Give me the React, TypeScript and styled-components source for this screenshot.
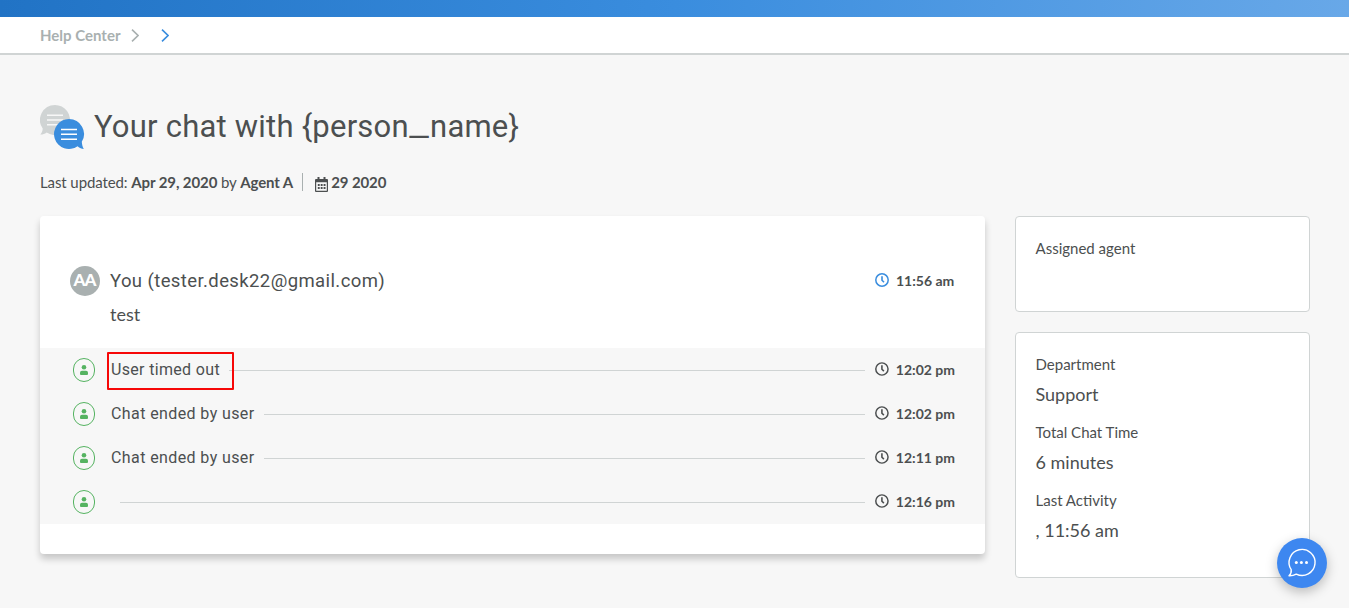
import React from 'react';
import styled, { createGlobalStyle } from 'styled-components';

const GlobalStyle = createGlobalStyle`
  * { box-sizing: border-box; }
  html, body { margin: 0; padding: 0; background: #f7f7f7; }
  body {
    height: 608px;
    overflow: hidden;
    color: #4c4f50;
    font-family: Lato, "Liberation Sans", sans-serif;
    font-size: 15px;
  }
`;

const Banner = styled.div`
  height: 17px;
  background: linear-gradient(90deg, #2173c5 0%, #3a8dde 50%, #68a8e8 100%);
`;

const Breadcrumbs = styled.nav`
  display: flex;
  align-items: center;
  height: 38px;
  padding: 0 40px 1px;
  background: #fff;
  border-bottom: 2px solid #d0d4d4;
  color: #a9b0b0;
  font-weight: 700;
  line-height: 20px;
`;

const Chevron = styled.svg<{ $gap: number }>`
  width: 8px;
  height: 13px;
  margin: 1px 0 0 ${(p) => p.$gap}px;
  fill: none;
  stroke: currentColor;
  stroke-width: 1.6;
`;

const BlueChevron = styled(Chevron)`
  color: #3a8dde;
`;

const Page = styled.main`
  padding: 50px 39px 0 40px;
`;

const TitleRow = styled.header`
  display: flex;
  height: 46px;
`;

const TitleIcon = styled.svg`
  width: 45px;
  height: 45px;
`;

const Title = styled.h1`
  margin: 1px 0 0 9px;
  font-family: Roboto, sans-serif;
  font-size: 31px;
  font-weight: 400;
  line-height: 42px;
  letter-spacing: 0.22px;
  white-space: nowrap;
`;

const Underscore = styled.span`
  display: inline-block;
  margin: 0 3.5px;
  transform: translateY(-1px) scaleX(1.4);
`;

const Meta = styled.div`
  display: flex;
  align-items: center;
  height: 20px;
  margin-top: 21px;
  letter-spacing: -0.1px;
  white-space: pre;
`;

const MetaDivider = styled.span`
  width: 1px;
  height: 18px;
  margin: 0 12px 0 9px;
  background: #a9b0b0;
`;

const CalendarIcon = styled.svg`
  width: 13px;
  height: 15px;
  margin: 4px 3px 0 0;
`;

const Columns = styled.div`
  display: grid;
  grid-template-columns: 945px 295px;
  column-gap: 30px;
  align-items: start;
  margin-top: 24px;
`;

const ChatCard = styled.section`
  height: 338px;
  padding-bottom: 30px;
  background: #fff;
  border-radius: 4px;
  box-shadow: 0 5px 7px rgba(0, 0, 0, 0.2);
`;

const Message = styled.article`
  display: flex;
  height: 132px;
  padding: 50px 30px 0;
`;

const Avatar = styled.div`
  width: 30px;
  height: 30px;
  margin-right: 10px;
  border-radius: 50%;
  background: #a9b0b0;
  color: #fff;
  font-size: 17px;
  font-weight: 900;
  line-height: 28px;
  letter-spacing: -1px;
  text-indent: -1px;
  text-align: center;
`;

const MessageBody = styled.div`
  flex: 1;
`;

const Sender = styled.div`
  font-family: Roboto, sans-serif;
  font-size: 18.5px;
  line-height: 30px;
  letter-spacing: 0.4px;
`;

const MessageText = styled.div`
  margin-top: 7px;
  font-size: 18px;
  line-height: 22px;
`;

const Timestamp = styled.div<{ $accent?: boolean }>`
  display: flex;
  align-items: center;
  width: 80px;
  height: 30px;
  padding-bottom: 2px;
  font-size: 14px;
  font-weight: 700;
  white-space: nowrap;
  svg {
    width: 14px;
    height: 14px;
    margin: 0 7px 0 0;
    color: ${(p) => (p.$accent ? '#3a8dde' : '#4c4f50')};
  }
`;

const Events = styled.div`
  background: #f7f7f7;
`;

const EventRow = styled.div`
  position: relative;
  display: flex;
  align-items: center;
  height: 44px;
  padding: 0 30px 0 33px;
`;

const UserBadge = styled.span`
  display: flex;
  align-items: center;
  justify-content: center;
  width: 22px;
  height: 24px;
  margin-right: 16px;
  border: 1px solid #55b361;
  border-radius: 11px;
  svg {
    width: 8px;
    height: 10px;
    fill: #55b361;
  }
`;

const EventText = styled.span<{ $spacing: number }>`
  font-family: Roboto, sans-serif;
  font-size: 16px;
  line-height: 22px;
  letter-spacing: ${(p) => p.$spacing}px;
  white-space: nowrap;
`;

const Rule = styled.span`
  flex: 1;
  height: 1px;
  margin: 1px 10px 0 9px;
  background: #d0d4d4;
`;

const Highlight = styled.span`
  position: absolute;
  left: 67px;
  top: 4px;
  width: 127px;
  height: 38px;
  border: 2px solid #f60808;
  border-radius: 1px;
`;

const Sidebar = styled.aside`
  display: flex;
  flex-direction: column;
  gap: 20px;
`;

const Panel = styled.section<{ $height: number }>`
  height: ${(p) => p.$height}px;
  padding: 19px 19.5px;
  background: #fff;
  border: 1px solid #d0d4d4;
  border-radius: 4px;
`;

const Label = styled.div`
  height: 24px;
  line-height: 24px;
`;

const Value = styled.div`
  height: 36px;
  margin-bottom: 8px;
  font-size: 18px;
  line-height: 36px;
`;

const ChatLauncher = styled.button`
  position: fixed;
  right: 22px;
  bottom: 20px;
  width: 50px;
  height: 50px;
  padding: 0;
  border: 0;
  border-radius: 50%;
  background: #3d87f0;
  box-shadow: 0 4px 12px rgba(0, 0, 0, 0.25);
  svg { display: block; width: 50px; height: 50px; }
`;

const Clock = () => (
  <svg viewBox="0 0 14 14" fill="none" stroke="currentColor">
    <circle cx="7" cy="7" r="6.2" strokeWidth="1.5" />
    <path d="M7 3.2V7.2L9 9.2" strokeWidth="1.6" />
  </svg>
);

const ChevronPath = () => <path d="M1 0.6 7 6.5 1 12.4" />;

const events = [
  { text: 'User timed out', time: '12:02 pm', spacing: 0.33, marked: true },
  { text: 'Chat ended by user', time: '12:02 pm', spacing: 0.4 },
  { text: 'Chat ended by user', time: '12:11 pm', spacing: 0.4 },
  { text: '', time: '12:16 pm', spacing: 0 },
];

const details = [
  ['Department', 'Support'],
  ['Total Chat Time', '6 minutes'],
  ['Last Activity', ', 11:56 am'],
];

export default function App() {
  return (
    <>
      <GlobalStyle />
      <Banner />
      <Breadcrumbs>
        Help Center
        <Chevron $gap={11} viewBox="0 0 8 13"><ChevronPath /></Chevron>
        <BlueChevron $gap={22} viewBox="0 0 8 13"><ChevronPath /></BlueChevron>
      </Breadcrumbs>
      <Page>
        <TitleRow>
          <TitleIcon viewBox="0 0 45 45">
            <path fill="#d0d4d4" d="M15 0a15 15 0 1 1-8.300 27.500C4.500 29 2.500 29.700 0.300 29.600c1.500-1.600 2.400-3.600 2.400-6A15 15 0 0 1 15 0Z" />
            <path d="M7 10.300h16M7 15h16M7 19.700h16" stroke="#f7f7f7" strokeWidth="1.500" />
            <path fill="#3a8dde" d="M29 14a15 15 0 1 0 8.600 27.300c2 1.800 4 2.700 6.200 2.700-1.200-2-1.800-4.300-2-7.200A15 15 0 0 0 29 14Z" />
            <path d="M21 24.500h16M21 29.300h16M21 34.200h16" stroke="#fff" strokeWidth="1.500" />
          </TitleIcon>
          <Title>Your chat with {'{person'}<Underscore>_</Underscore>{'name}'}</Title>
        </TitleRow>
        <Meta>
          <span>Last updated: <b>Apr 29, 2020</b> by <b>Agent A</b></span>
          <MetaDivider />
          <CalendarIcon viewBox="0 0 13 15">
            <path fill="#4c4f50" fillRule="evenodd" d="M2.500 0h2v2h4V0h2v2H12a1 1 0 0 1 1 1v11a1 1 0 0 1-1 1H1a1 1 0 0 1-1-1V3a1 1 0 0 1 1-1h1.500ZM1.200 5.200v8.600h10.600V5.200Z" />
            <path d="M2.800 7.900h7.800M2.800 10.900h7.800" stroke="#4c4f50" strokeWidth="2" strokeDasharray="1.900 1" />
          </CalendarIcon>
          <b>29 2020</b>
        </Meta>
        <Columns>
          <ChatCard>
            <Message>
              <Avatar>AA</Avatar>
              <MessageBody>
                <Sender>You (tester.desk22@gmail.com)</Sender>
                <MessageText>test</MessageText>
              </MessageBody>
              <Timestamp $accent><Clock />11:56 am</Timestamp>
            </Message>
            <Events>
              {events.map((e) => (
                <EventRow key={e.time + e.text}>
                  <UserBadge>
                    <svg viewBox="0 0 8 10">
                      <circle cx="4" cy="2.300" r="2.300" />
                      <path d="M2 5.800h4a2 2 0 0 1 2 2V9a1 1 0 0 1-1 1H1a1 1 0 0 1-1-1V7.800a2 2 0 0 1 2-2Z" />
                    </svg>
                  </UserBadge>
                  <EventText $spacing={e.spacing}>{e.text}</EventText>
                  <Rule />
                  <Timestamp><Clock />{e.time}</Timestamp>
                  {e.marked && <Highlight />}
                </EventRow>
              ))}
            </Events>
          </ChatCard>
          <Sidebar>
            <Panel $height={96}><Label>Assigned agent</Label></Panel>
            <Panel $height={246}>
              {details.map(([label, value]) => (
                <React.Fragment key={label}>
                  <Label>{label}</Label>
                  <Value>{value}</Value>
                </React.Fragment>
              ))}
            </Panel>
          </Sidebar>
        </Columns>
      </Page>
      <ChatLauncher aria-label="Open chat">
        <svg viewBox="0 0 50 50" fill="none">
          <path d="M14.200 31.600A13 13 0 1 1 19.300 36.100C16.800 37.500 14.500 37.900 12 37.800c1.700-1.500 2.500-3.500 2.200-6.200Z" stroke="#fff" strokeWidth="1.400" strokeLinejoin="round" />
          <circle cx="19.300" cy="24.500" r="1.500" fill="#fff" />
          <circle cx="24.400" cy="24.500" r="1.500" fill="#fff" />
          <circle cx="29.500" cy="24.500" r="1.500" fill="#fff" />
        </svg>
      </ChatLauncher>
    </>
  );
}
